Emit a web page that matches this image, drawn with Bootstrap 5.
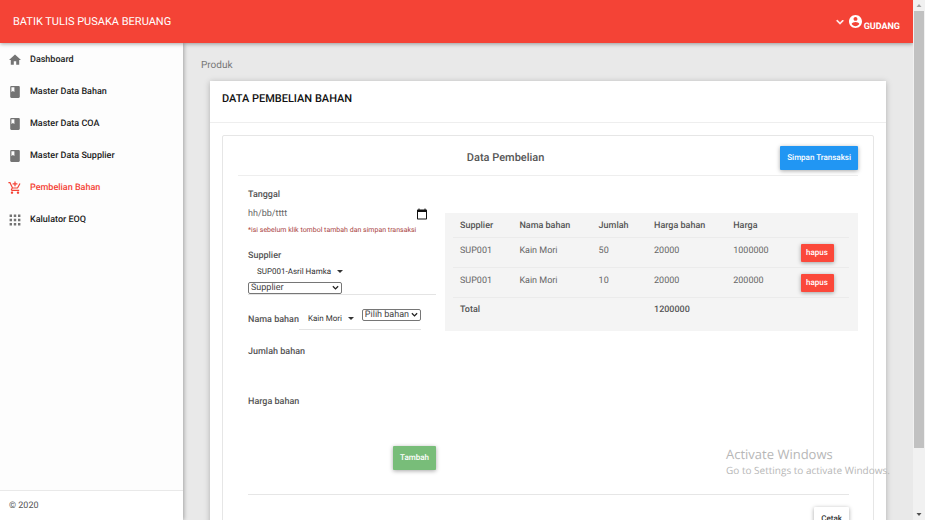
<!DOCTYPE html>
<html lang="id">
<head>
<meta charset="utf-8">
<meta name="viewport" content="width=device-width, initial-scale=1">
<title>Batik Tulis Pusaka Beruang</title>
<link href="https://cdn.jsdelivr.net/npm/bootstrap@5.3.0/dist/css/bootstrap.min.css" rel="stylesheet">
<style>
  body { font-family: Roboto, "Liberation Sans", sans-serif; font-size: 9px; line-height: 12px; color: #555; background: #e9e9e9; text-rendering: geometricPrecision; }
  button, input, select { text-rendering: inherit; }
  .topbar { background: #f44336; height: 43px; padding: 0 13px; box-shadow: 0 1px 4px rgba(0,0,0,.35); z-index: 3; }
  .topbar .brand { font-size: 11px; color: #fff; }
  .topbar .user { font-weight: 700; color: #fff; gap: 2px; }
  .user-name { padding-top: 10px; }
  .side { width: 183px; background: #fdfdfd; box-shadow: 1px 0 4px rgba(0,0,0,.3); z-index: 2; }
  .side .nav-link { height: 32px; padding: 0 9px; gap: 9px; font-weight: 500; color: #222; }
  .side .nav-link svg { width: 12px; height: 14px; overflow: visible; fill: #747474; }
  .side .nav-link.active { color: #f44336; }
  .side .nav-link.active svg { fill: #f44336; }
  .side .menu { padding-top: 1px; }
  .side .legal { border-top: 1px solid #e9e9e9; background: #fff; padding: 9px 9px 8px; }
  .page { padding: 17px 27px 0; }
  .crumb { font-size: 10px; color: #777; margin: 0 0 9px -9px; }
  .panel { background: #fff; box-shadow: 0 1px 6px rgba(0,0,0,.25); }
  .panel-head { height: 42px; padding: 10px 12px; border-bottom: 1px solid #eee; }
  .panel-head h1 { font-size: 11px; line-height: 16px; font-weight: 500; color: #111; margin: 0; }
  .inner { margin: 12px 12px 0; border: 1px solid #e6e6e6; border-radius: 2px; padding: 10px 15px; min-height: 420px; }
  .inner-head { gap: 7px; padding-bottom: 5px; border-bottom: 1px solid #eee; }
  .inner-head h2 { font-size: 11px; line-height: 16px; font-weight: 500; margin: 0; }
  .btn-raised { font-size: 8px; line-height: 12px; font-weight: 500; color: #fff; border: 0; border-radius: 1px; padding: 6px 7px; box-shadow: 0 1px 4px rgba(0,0,0,.35); }
  .btn-blue { background: #2196f3; min-width: 77px; }
  .btn-red { background: #fb483a; font-weight: 500; padding: 3px 5px; min-width: 33px; }
  .btn-green { background: #78bd79; min-width: 43px; }
  .btn-blank { background: #fff; color: #333; }
  .form-col { width: 188px; }
  .form-col label { font-weight: 500; display: block; }
  .form-part { padding: 13px 0 0 10px; gap: 9px; }
  .part-gap { margin-top: 14px; }
  .date-box { padding: 7px 8px 4px 0; }
  .date-box input { border: 0; padding: 0; font-size: 9px; line-height: 12px; background: none; color: #555; }
  .date-box input::placeholder { color: #666; opacity: 1; }
  .date-box button, .pick { border: 0; background: none; padding: 0; color: #333; }
  .hint { font-size: 7px; line-height: 12px; color: #a94442; }
  .pick { font-size: 8px; line-height: 12px; padding: 0 9px; }
  .pick::after { margin-left: 6px; border-top-width: 3px; border-left-width: 3px; border-right-width: 3px; vertical-align: 1px; }
  .native { appearance: none; border: 1px solid #767676; border-radius: 2px; color: #444; font-size: 9px; line-height: 10px; padding: 0 10px 0 2px; height: 12px;
    background: #fff url("data:image/svg+xml,%3Csvg xmlns='http://www.w3.org/2000/svg' viewBox='0 0 8 6'%3E%3Cpath d='M1 1l3 3 3-3' fill='none' stroke='%23222' stroke-width='1.500'/%3E%3C/svg%3E") no-repeat right 2px center / 7px 6px; }
  .under { border-bottom: 1px solid #e4e4e4; }
  .ghost { border: 0; background: none; height: 22px; padding: 0; display: block; }
  .buy { background: #f4f4f4; padding: 0 9px 10px 8px; margin-top: 24px; }
  .buy table { margin: 0; --bs-table-bg: transparent; table-layout: fixed; }
  .buy th, .buy td { padding: 7px 7px 5px; border-bottom: 1px solid #ebebeb; color: #666; line-height: 12px; }
  .buy tbody td:last-child { padding-top: 6px; }
  .buy th { font-weight: 500; color: #555; }
  .buy tfoot th { border: 0; padding-top: 6px; }
  .end-line { border-top: 1px solid #e6e6e6; margin: 24px 9px 0 10px; padding-top: 12px; }
  .rail { width: 12px; background: #f1f1f1; }
  .rail svg { width: 12px; height: 11px; }
  .thumb { background: #c1c1c1; height: 84%; margin: 0 1px; }
  .watermark { position: absolute; left: 726px; top: 446px; z-index: 5; font-family: "Open Sans", "Noto Sans", sans-serif; color: #b7b7b7; font-size: 10px; line-height: 14px; pointer-events: none; white-space: nowrap; }
  .watermark strong { display: block; font-size: 13px; line-height: 17px; font-weight: 400; }
</style>
<script src="https://cdn.jsdelivr.net/npm/bootstrap@5.3.0/dist/js/bootstrap.bundle.min.js"></script>
</head>
<body class="vh-100 d-flex overflow-hidden">
<div class="d-flex flex-column flex-grow-1 overflow-hidden">
  <header class="topbar d-flex align-items-center justify-content-between flex-shrink-0">
    <a class="brand text-decoration-none" href="#">BATIK TULIS PUSAKA BERUANG</a>
    <a class="user d-flex align-items-center text-decoration-none" href="#">
      <svg width="14" height="14" viewBox="0 0 24 24" fill="#fff" stroke="#fff" aria-hidden="true"><path d="M7.41 8.59 12 13.17l4.59-4.58L18 10l-6 6-6-6z"/></svg>
      <svg width="13" height="13" viewBox="2 2 20 20" fill="#fff" aria-hidden="true"><path d="M12 2C6.48 2 2 6.48 2 12s4.480 10 10 10 10-4.480 10-10S17.520 2 12 2zm0 3c1.660 0 3 1.340 3 3s-1.340 3-3 3-3-1.340-3-3 1.340-3 3-3zm0 14.200c-2.500 0-4.710-1.280-6-3.220.030-1.990 4-3.080 6-3.080 1.990 0 5.970 1.090 6 3.080-1.290 1.940-3.500 3.220-6 3.220z"/></svg>
      <span class="user-name">GUDANG</span>
    </a>
  </header>
  <div class="d-flex flex-grow-1 overflow-hidden">
    <aside class="side d-flex flex-column flex-shrink-0">
      <nav class="menu nav flex-column flex-grow-1">
        <a class="nav-link d-flex align-items-center" href="#"><svg viewBox="2 1 20 22"><path d="M10 20v-6h4v6h5v-8h3L12 3 2 12h3v8z"/></svg>Dashboard</a>
        <a class="nav-link d-flex align-items-center" href="#"><svg viewBox="2 1 20 22"><path d="M18 2H6c-1.100 0-2 .9-2 2v16c0 1.100.9 2 2 2h12c1.100 0 2-.9 2-2V4c0-1.100-.9-2-2-2zM6 4h5v8l-2.500-1.500L6 12V4z"/></svg>Master Data Bahan</a>
        <a class="nav-link d-flex align-items-center" href="#"><svg viewBox="2 1 20 22"><path d="M18 2H6c-1.100 0-2 .9-2 2v16c0 1.100.9 2 2 2h12c1.100 0 2-.9 2-2V4c0-1.100-.9-2-2-2zM6 4h5v8l-2.500-1.500L6 12V4z"/></svg>Master Data COA</a>
        <a class="nav-link d-flex align-items-center" href="#"><svg viewBox="2 1 20 22"><path d="M18 2H6c-1.100 0-2 .9-2 2v16c0 1.100.9 2 2 2h12c1.100 0 2-.9 2-2V4c0-1.100-.9-2-2-2zM6 4h5v8l-2.500-1.500L6 12V4z"/></svg>Master Data Supplier</a>
        <a class="nav-link active d-flex align-items-center" href="#"><svg viewBox="2 1 20 22"><path d="M11 9h2V6h3V4h-3V1h-2v3H8v2h3v3zm-4 9c-1.100 0-1.990.9-1.990 2S5.900 22 7 22s2-.9 2-2-.9-2-2-2zm10 0c-1.100 0-1.990.9-1.990 2s.89 2 1.990 2 2-.9 2-2-.9-2-2-2zm-9.830-3.250.03-.12.9-1.630h7.450c.75 0 1.410-.41 1.750-1.030l3.860-7.010L19.420 4h-.01l-1.100 2-2.760 5H8.530l-.13-.27L6.160 6l-.95-2-.94-2H1v2h2l3.600 7.590-1.350 2.450c-.16.28-.25.61-.25.96 0 1.100.9 2 2 2h12v-2H7.420c-.13 0-.25-.11-.25-.25z"/></svg>Pembelian Bahan</a>
        <a class="nav-link d-flex align-items-center" href="#"><svg viewBox="2 1 20 22"><path d="M3 3h4v4H3zm7 0h4v4h-4zm7 0h4v4h-4zM3 10h4v4H3zm7 0h4v4h-4zm7 0h4v4h-4zM3 17h4v4H3zm7 0h4v4h-4zm7 0h4v4h-4z"/></svg>Kalulator EOQ</a>
      </nav>
      <footer class="legal">© 2020</footer>
    </aside>
    <main class="page flex-grow-1">
      <p class="crumb">Produk</p>
      <section class="panel">
        <div class="panel-head"><h1>DATA PEMBELIAN BAHAN</h1></div>
        <div class="overflow-hidden">
          <div class="inner">
            <div class="inner-head d-flex align-items-center">
              <h2 class="flex-grow-1 text-center">Data Pembelian</h2>
              <button class="btn-raised btn-blue" type="button">Simpan Transaksi</button>
            </div>
            <div class="form-part d-flex align-items-start">
              <form class="form-col flex-shrink-0">
                <label for="tgl">Tanggal</label>
                <div class="date-box d-flex align-items-center justify-content-between">
                  <input id="tgl" type="text" placeholder="hh/bb/tttt">
                  <button type="button" class="d-flex" aria-label="Kalender"><svg width="12" height="12" viewBox="0 0 24 24" fill="#111"><path d="M20 3h-1V1h-2v2H7V1H5v2H4c-1.100 0-2 .9-2 2v16c0 1.100.9 2 2 2h16c1.100 0 2-.9 2-2V5c0-1.100-.9-2-2-2zm0 18H4V8h16v13z"/></svg></button>
                </div>
                <div class="hint">*isi sebelum klik tombol tambah dan simpan transaksi</div>
                <div class="under part-gap">
                  <label for="sup">Supplier</label>
                  <button type="button" class="pick dropdown-toggle d-block mt-1">SUP001-Asril Hamka</button>
                  <select id="sup" class="native w-50 d-block mt-1"><option>Supplier</option></select>
                </div>
                <div class="d-flex align-items-center part-gap">
                  <label for="bhn">Nama bahan</label>
                  <div class="under d-flex pb-1">
                    <button type="button" class="pick dropdown-toggle pe-2 pt-1">Kain Mori</button>
                    <select id="bhn" class="native"><option>Pilih bahan</option></select>
                  </div>
                </div>
                <label for="jml" class="mt-3">Jumlah bahan</label>
                <input id="jml" class="ghost w-100" type="text">
                <label for="hrg" class="mt-3">Harga bahan</label>
                <input id="hrg" class="ghost w-100" type="text">
                <div class="text-end mt-3"><button class="btn-raised btn-green" type="button">Tambah</button></div>
              </form>
              <div class="buy flex-grow-1">
                <table class="table">
                  <colgroup><col style="width:15%"><col style="width:20%"><col style="width:14%"><col style="width:20%"><col style="width:17%"><col style="width:14%"></colgroup>
                  <thead><tr><th>Supplier</th><th>Nama bahan</th><th>Jumlah</th><th>Harga bahan</th><th>Harga</th><th></th></tr></thead>
                  <tbody>
                    <tr><td>SUP001</td><td>Kain Mori</td><td>50</td><td>20000</td><td>1000000</td><td><button class="btn-raised btn-red" type="button">hapus</button></td></tr>
                    <tr><td>SUP001</td><td>Kain Mori</td><td>10</td><td>20000</td><td>200000</td><td><button class="btn-raised btn-red" type="button">hapus</button></td></tr>
                  </tbody>
                  <tfoot><tr><th colspan="3">Total</th><th colspan="3">1200000</th></tr></tfoot>
                </table>
              </div>
            </div>
            <div class="end-line text-end"><button class="btn-raised btn-blank" type="button">Cetak</button></div>
          </div>
        </div>
      </section>
    </main>
  </div>
</div>
<div class="rail flex-shrink-0 d-flex flex-column" aria-hidden="true">
  <svg viewBox="0 0 11 11"><path d="M3 7l2.500-3L8 7z" fill="#a3a3a3"/></svg>
  <div class="thumb"></div>
  <svg class="mt-auto" viewBox="0 0 11 11"><path d="M3 4l2.500 3L8 4z" fill="#505050"/></svg>
</div>
<div class="watermark"><strong>Activate Windows</strong>Go to Settings to activate Windows.</div>
</body>
</html>
